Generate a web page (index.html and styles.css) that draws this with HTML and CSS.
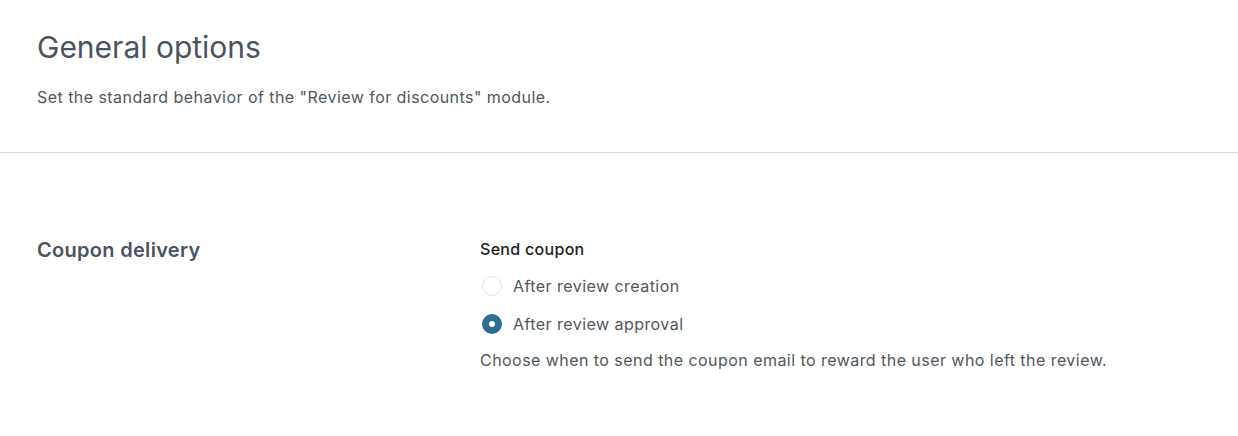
FILE: index.html
```html
<!DOCTYPE html>
<html lang="en">
<head>
    <meta charset="UTF-8">
    <meta name="viewport" content="width=device-width, initial-scale=1.0">
    <title>General options</title>
    <link rel="stylesheet" href="styles.css">
</head>
<body>
    <div class="header">
        <h1>General options</h1>
        <p>Set the standard behavior of the "Review for discounts" module.</p>
    </div>
    <div class="section">
        <h2>Coupon delivery</h2>
        <div class="field">
            <div class="field-label">Send coupon</div>
            <label class="radio">
                <input type="radio" name="send_coupon" value="creation">
                <span>After review creation</span>
            </label>
            <label class="radio">
                <input type="radio" name="send_coupon" value="approval" checked>
                <span>After review approval</span>
            </label>
            <p class="help">Choose when to send the coupon email to reward the user who left the review.</p>
        </div>
    </div>
</body>
</html>
```

FILE: styles.css
```css
body { font-family: Inter, "Noto Sans", sans-serif; margin: 0; padding: 0; background: #fff; color: #50575e; }
.header { padding: 30px 37px 44px; border-bottom: 1px solid #d4d6d5; }
.header h1 { margin: 0; font-size: 30px; font-weight: 400; line-height: 34px; color: #4a5361; }
.header p { margin: 22px 0 0; font-size: 16px; line-height: 22px; letter-spacing: 0.45px; color: #50575e; }
.section { display: flex; padding: 85px 37px 40px; }
.section h2 { width: 443px; margin: 0; font-size: 20px; font-weight: 600; line-height: 24px; letter-spacing: 0.3px; color: #4a5361; }
.field-label { font-size: 16px; font-weight: 500; color: #1e1e1e; line-height: 22px; letter-spacing: 0.3px; margin-bottom: 7px; }
.radio { display: flex; align-items: center; gap: 11px; height: 38px; margin-left: 2px; font-size: 16px; letter-spacing: 0.45px; color: #50575e; }
.radio input { appearance: none; margin: 0; width: 20px; height: 20px; border: 1px solid #dcdcde; border-radius: 50%; background: #fff; }
.radio input:checked { border: 7px solid #306c93; background: #fff; }
.help { margin: 6px 0 0; font-size: 16px; line-height: 22px; letter-spacing: 0.45px; color: #50575e; }
```
